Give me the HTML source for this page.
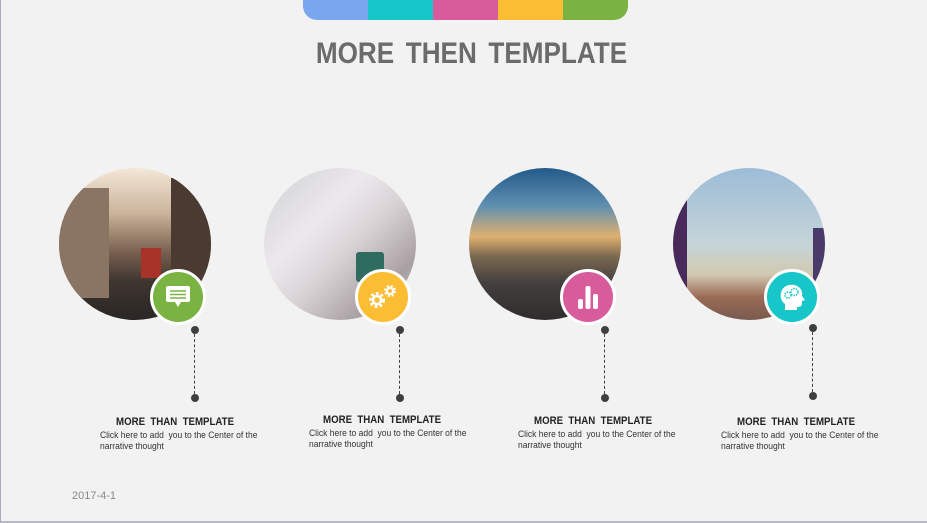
<!DOCTYPE html>
<html><head><meta charset="utf-8"><style>
*{margin:0;padding:0;box-sizing:border-box}
body{width:927px;height:523px;background:#f2f2f2;position:relative;overflow:hidden;font-family:"Liberation Sans",Arial,sans-serif}
.frame{position:absolute;left:0;top:0;width:927px;height:523px;border-left:1px solid #a8a8b8;border-bottom:2px solid #b8b8c8}
.tabs{position:absolute;left:303px;top:-1px;width:325px;height:21px;border-radius:0 0 14px 14px;overflow:hidden;display:flex}
.tabs div{flex:1}
h1{position:absolute;left:8px;width:927px;top:37px;text-align:center;font-size:30px;font-weight:bold;color:#6b6b6b;letter-spacing:0;word-spacing:5px;transform:scaleX(.87)}
.ph{position:absolute;width:152px;height:152px;border-radius:50%;top:168px;overflow:hidden}
.ic{position:absolute;width:56px;height:56px;border-radius:50%;top:269px;border:3px solid #fff;display:flex;align-items:center;justify-content:center}
.dot{position:absolute;width:8px;height:8px;border-radius:50%;background:#3f3f3f}
.ln{position:absolute;width:0;border-left:1.5px dashed #444}
.t{position:absolute;font-size:11px;font-weight:bold;color:#222;word-spacing:3px;transform:scaleX(.88);transform-origin:left}
.d{position:absolute;font-size:9px;color:#333;line-height:11px;width:180px;transform:scaleX(.945);transform-origin:left}
.date{position:absolute;left:72px;top:490px;font-size:11px;color:#888}
</style></head><body>
<div class="frame"></div>
<div class="tabs"><div style="background:#79a6ef"></div><div style="background:#16c6c8"></div><div style="background:#d85c9c"></div><div style="background:#fbbd33"></div><div style="background:#7bb342"></div></div>
<h1>MORE THEN TEMPLATE</h1>

<div class="ph" style="left:59px;background:linear-gradient(180deg,#f4e8d8 0%,#c9b39a 30%,#7a6150 55%,#3d3530 75%,#2a2624 100%)"><div style="position:absolute;left:0;top:20px;width:50px;height:110px;background:#8a7565"></div><div style="position:absolute;right:0;top:10px;width:40px;height:110px;background:#4a3a32"></div><div style="position:absolute;left:82px;top:80px;width:20px;height:30px;background:#a63228"></div></div>
<div class="ph" style="left:264px;background:linear-gradient(135deg,#cfcfd2 0%,#ece9ec 35%,#d8d2d5 55%,#a89fa3 80%,#c9c3c5 100%)"><div style="position:absolute;left:92px;top:84px;width:28px;height:30px;background:#2f6c60;border-radius:3px"></div></div>
<div class="ph" style="left:469px;background:linear-gradient(180deg,#235a8a 0%,#5f8fb0 25%,#e0b070 45%,#7b6a50 58%,#454040 75%,#2e2c2c 100%)"></div>
<div class="ph" style="left:673px;background:linear-gradient(180deg,#9cbcd8 0%,#c5d5d8 50%,#d2c9b0 70%,#9a6a55 85%,#7a5a50 100%)"><div style="position:absolute;left:0;top:30px;width:14px;height:110px;background:#4a2a5a"></div><div style="position:absolute;right:0;top:60px;width:12px;height:60px;background:#4a3a6a"></div></div>

<div class="ic" style="left:150px;background:#7bb342"><svg width="26" height="24" viewBox="0 0 26 24"><rect x="1" y="1" width="24" height="16" rx="2" fill="#fff"/><path d="M10 17l3 5 3-5z" fill="#fff"/><path d="M5 6h16M5 9.5h16M5 13h16" stroke="#7bb342" stroke-width="1.6"/></svg></div>
<div class="ic" style="left:355px;background:#fbbd33"><svg width="34" height="28" viewBox="0 0 34 28"><g fill="none" stroke="#fff"><circle cx="11" cy="17" r="6" stroke-width="4" stroke-dasharray="2.5 2"/><circle cx="11" cy="17" r="4" stroke-width="2.5"/><circle cx="24" cy="8" r="4.5" stroke-width="3" stroke-dasharray="2 1.6"/><circle cx="24" cy="8" r="3" stroke-width="2"/></g></svg></div>
<div class="ic" style="left:560px;background:#d85c9c"><svg width="24" height="28" viewBox="0 0 24 28"><rect x="2" y="16" width="5" height="10" rx="2" fill="#fff"/><rect x="9.5" y="3" width="5" height="23" rx="2" fill="#fff"/><rect x="17" y="11" width="5" height="15" rx="2" fill="#fff"/></svg></div>
<div class="ic" style="left:764px;background:#16c6c8"><svg width="28" height="30" viewBox="0 0 28 30"><path d="M7 28v-6c-4-3-5-7-4-11 1-6 7-9 13-8 6 1 9 6 8 11l3 4-3 1v3c0 2-2 3-5 3v3z" fill="#fff"/><circle cx="10" cy="13" r="3" fill="none" stroke="#16c6c8" stroke-width="1.5" stroke-dasharray="1.5 1"/><circle cx="16.5" cy="10" r="3.5" fill="none" stroke="#16c6c8" stroke-width="1.5" stroke-dasharray="1.5 1"/></svg></div>

<div class="dot" style="left:191px;top:326px"></div><div class="ln" style="left:194px;top:334px;height:60px"></div><div class="dot" style="left:191px;top:394px"></div>
<div class="dot" style="left:396px;top:326px"></div><div class="ln" style="left:399px;top:334px;height:60px"></div><div class="dot" style="left:396px;top:394px"></div>
<div class="dot" style="left:601px;top:326px"></div><div class="ln" style="left:604px;top:334px;height:60px"></div><div class="dot" style="left:601px;top:394px"></div>
<div class="dot" style="left:809px;top:324px"></div><div class="ln" style="left:812px;top:332px;height:60px"></div><div class="dot" style="left:809px;top:392px"></div>

<div class="t" style="left:116px;top:416px">MORE THAN TEMPLATE</div>
<div class="d" style="left:100px;top:430px">Click here to add &nbsp;you to the Center of the narrative thought</div>
<div class="t" style="left:323px;top:414px">MORE THAN TEMPLATE</div>
<div class="d" style="left:309px;top:428px">Click here to add &nbsp;you to the Center of the narrative thought</div>
<div class="t" style="left:534px;top:415px">MORE THAN TEMPLATE</div>
<div class="d" style="left:518px;top:429px">Click here to add &nbsp;you to the Center of the narrative thought</div>
<div class="t" style="left:737px;top:416px">MORE THAN TEMPLATE</div>
<div class="d" style="left:721px;top:430px">Click here to add &nbsp;you to the Center of the narrative thought</div>

<div class="date">2017-4-1</div>
</body></html>
